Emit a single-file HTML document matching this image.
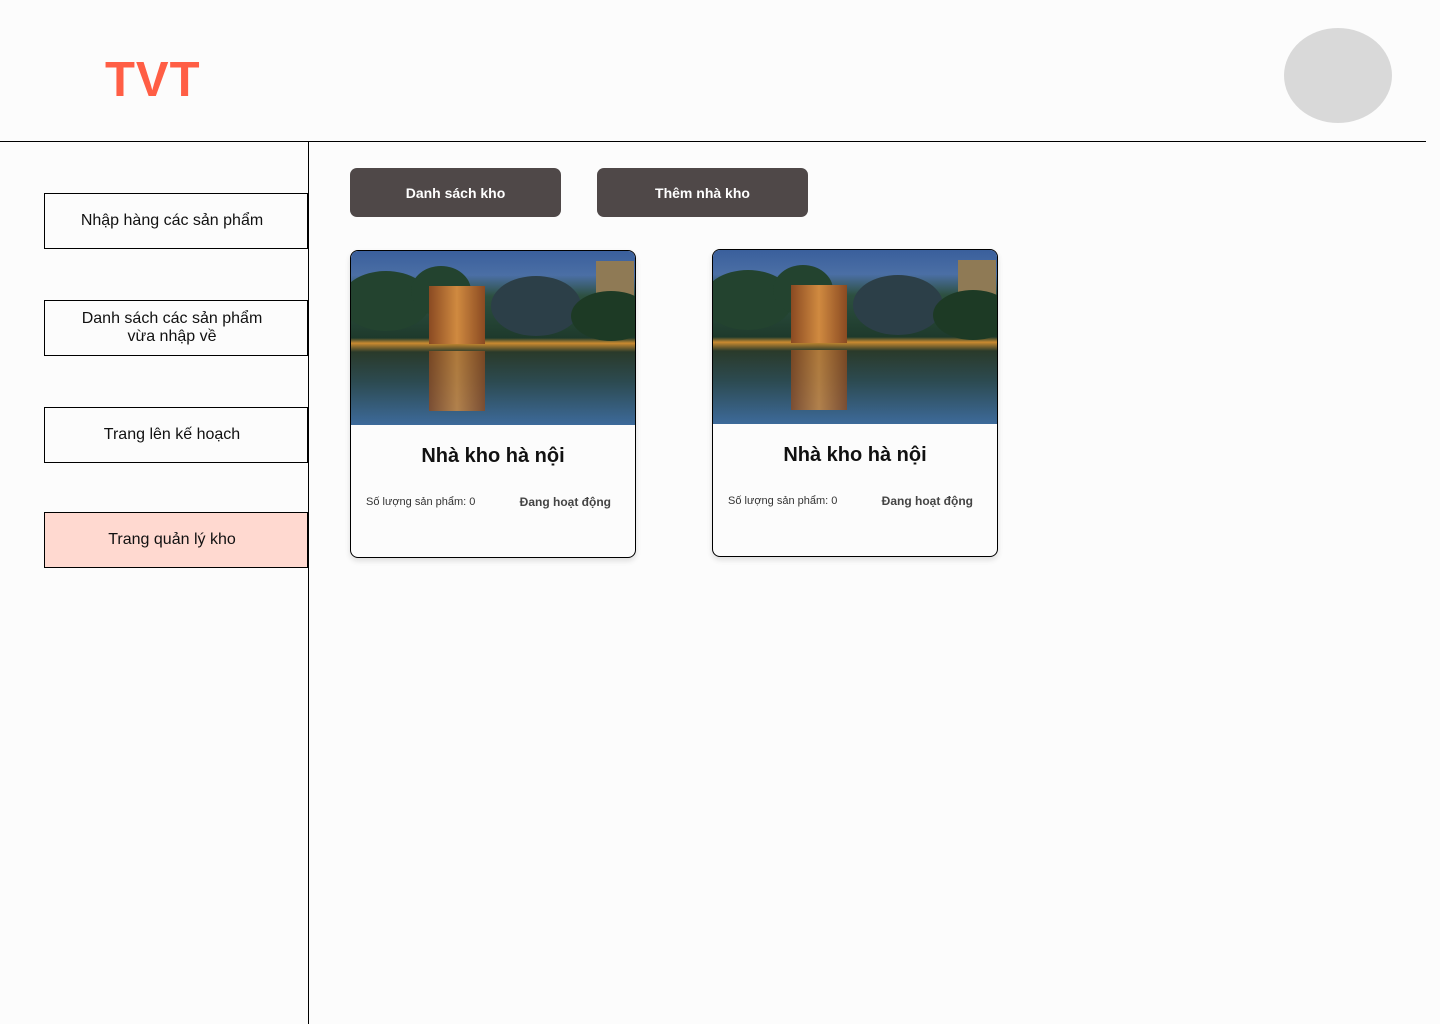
<!DOCTYPE html>
<html><head><meta charset="utf-8"><style>
*{margin:0;padding:0;box-sizing:border-box}
body{width:1440px;height:1024px;background:#fcfcfc;font-family:"Liberation Sans",sans-serif;position:relative;overflow:hidden;color:#111}
.logo{position:absolute;left:105px;top:52px;font-size:49px;font-weight:bold;color:#ff5e45;letter-spacing:1px}
.avatar{position:absolute;left:1284px;top:28px;width:108px;height:95px;border-radius:50%;background:#d9d9d9}
.hl{position:absolute;left:0;top:141px;width:1426px;height:1px;background:#000}
.vl{position:absolute;left:308px;top:141px;width:1px;height:883px;background:#000}
.nav{position:absolute;left:44px;width:264px;height:56px;border:1px solid #000;display:flex;align-items:center;justify-content:center;text-align:center;font-size:16px;line-height:18px;color:#111;padding-right:8px}
.btn{position:absolute;top:168px;width:211px;height:49px;background:#4f4848;border-radius:7px;color:#fff;font-weight:bold;font-size:14px;display:flex;align-items:center;justify-content:center}
.card{position:absolute;width:286px;height:308px;border:1px solid #000;border-radius:8px;overflow:hidden;background:#fcfcfc;box-shadow:0 3px 6px rgba(0,0,0,.12)}
.img{height:174px;position:relative;background:linear-gradient(#3a5f9c 0%,#4b6fa5 14%,#2d5040 26%,#1e3a2c 50%,#c98a30 53%,#2a3a2a 58%,#2c4a50 75%,#3d6a9a 100%);overflow:hidden}
.t{position:absolute;border-radius:50%;background:#23432f}
.tw{position:absolute;left:78px;width:56px;background:linear-gradient(90deg,#8a4a22,#d08a40,#8a4a22)}
.bd{position:absolute;left:245px;top:10px;width:38px;height:40px;background:#8f7a55}
.ttl{text-align:center;font-weight:bold;font-size:20px;margin-top:20px}
.info{display:flex;justify-content:space-between;padding:0 24px 0 15px;margin-top:27px;align-items:center}
.info .a{font-size:11px;color:#333}.info .b{font-size:12px;font-weight:bold;color:#444}
</style></head><body>
<div class="logo">TVT</div>
<div class="avatar"></div>
<div class="hl"></div><div class="vl"></div>
<div class="nav" style="top:193px">Nhập hàng các sản phẩm</div>
<div class="nav" style="top:300px">Danh sách các sản phẩm<br>vừa nhập về</div>
<div class="nav" style="top:407px">Trang lên kế hoạch</div>
<div class="nav" style="top:512px;background:#ffd9d0">Trang quản lý kho</div>
<div class="btn" style="left:350px">Danh sách kho</div>
<div class="btn" style="left:597px">Thêm nhà kho</div>
<div class="card" style="left:350px;top:250px">
<div class="img"><div class="bd"></div><div class="t" style="left:-10px;top:20px;width:90px;height:60px"></div><div class="t" style="left:60px;top:15px;width:60px;height:50px"></div><div class="t" style="left:140px;top:25px;width:90px;height:60px;background:#2c3f48"></div><div class="t" style="left:220px;top:40px;width:80px;height:50px;background:#1d3a25"></div><div class="tw" style="top:35px;height:58px"></div><div class="tw" style="top:100px;height:60px;opacity:.8"></div></div>
<div class="ttl">Nhà kho hà nội</div>
<div class="info"><span class="a">Số lượng sản phẩm: 0</span><span class="b">Đang hoạt động</span></div></div>
<div class="card" style="left:712px;top:249px">
<div class="img"><div class="bd"></div><div class="t" style="left:-10px;top:20px;width:90px;height:60px"></div><div class="t" style="left:60px;top:15px;width:60px;height:50px"></div><div class="t" style="left:140px;top:25px;width:90px;height:60px;background:#2c3f48"></div><div class="t" style="left:220px;top:40px;width:80px;height:50px;background:#1d3a25"></div><div class="tw" style="top:35px;height:58px"></div><div class="tw" style="top:100px;height:60px;opacity:.8"></div></div>
<div class="ttl">Nhà kho hà nội</div>
<div class="info"><span class="a">Số lượng sản phẩm: 0</span><span class="b">Đang hoạt động</span></div></div>
</body></html>
